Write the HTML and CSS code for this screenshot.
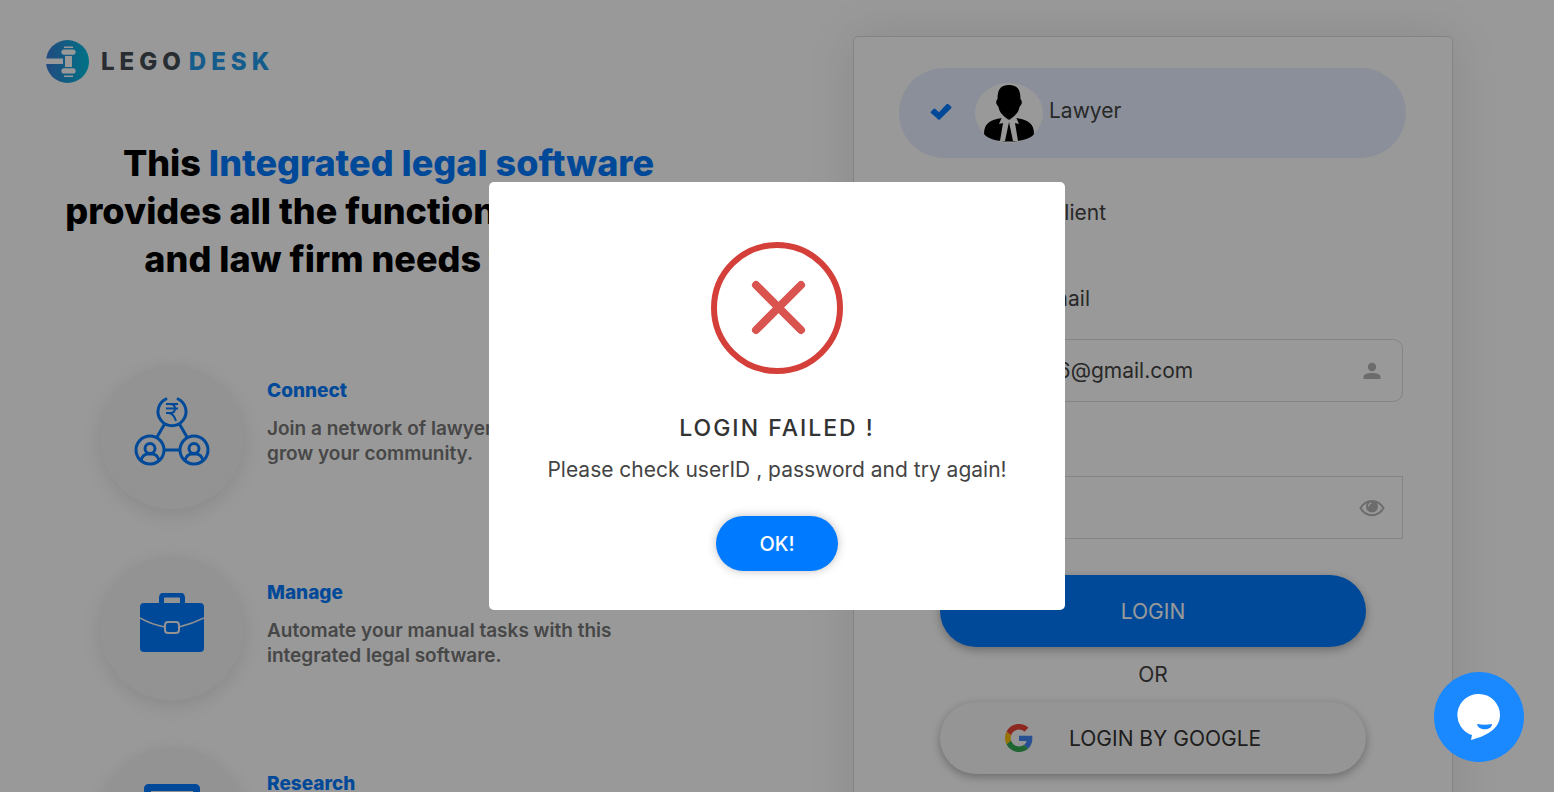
FILE: index.html
```html
<!DOCTYPE html>
<html lang="en">
<head>
<meta charset="utf-8">
<meta name="viewport" content="width=device-width, initial-scale=1">
<title>Legodesk Login</title>
<link rel="stylesheet" href="styles.css">
</head>
<body>
<main class="page">
  <section class="intro">
    <a class="logo" href="#">
      <svg class="logo-mark" viewBox="0 0 43 43" aria-hidden="true">
        <defs>
          <linearGradient id="mark" x1="0" x2="1"><stop offset="0" stop-color="#3a7bd5"/><stop offset="1" stop-color="#00bfe0"/></linearGradient>
        </defs>
        <circle cx="21.500" cy="21.500" r="21.500" fill="url(#mark)"/>
        <path fill="#fff" d="M0 18.500h17v5.500H0zM18 6.500h9V8h-9zM18 35.500h9V37h-9zM19 16h7v11H19zM18 9.500h9a2.600 2.600 0 0 1 0 5.200h-9a2.600 2.600 0 0 1 0-5.200zM18 28.300h9a2.600 2.600 0 0 1 0 5.200h-9a2.600 2.600 0 0 1 0-5.200z"/>
      </svg>
      <span class="logo-text">LEGO<span class="logo-accent">DESK</span></span>
    </a>
    <h1 class="headline">This <span class="accent">Integrated legal software</span><br>provides all the functions the lawyer<br>and law firm needs to grow.</h1>
    <div class="features">
      <article class="feature">
        <div class="feature-icon">
          <svg width="76" height="70" viewBox="0 0 76 70" fill="none" stroke="#007bff" stroke-width="3" stroke-linecap="round" aria-hidden="true">
            <path d="M32 2a14 14 0 1 0 12 0M30 28l-7 12M46 28l7 12M31 53h14"/>
            <path stroke-width="2" stroke-linecap="butt" d="M32 7h12M32 11.500h12M32 16h4q5 0 5-4.500T36 7M35 16q5 1 7 8"/>
            <circle cx="16" cy="53" r="14"/><circle cx="60" cy="53" r="14"/>
            <circle cx="16" cy="51.500" r="5"/><circle cx="60" cy="51.500" r="5"/>
            <path d="M7 63q2-6 7-6h4q5 0 7 6M51 63q2-6 7-6h4q5 0 7 6"/>
          </svg>
        </div>
        <div class="feature-text feature-text-raised">
          <h2 class="feature-title">Connect</h2>
          <p class="feature-copy">Join a network of lawyers and<br>grow your community.</p>
        </div>
      </article>
      <article class="feature">
        <div class="feature-icon">
          <svg width="64" height="60" viewBox="0 0 64 60" aria-hidden="true">
            <path d="M21.500 12V5q0-3 3-3h15q3 0 3 3v7" fill="none" stroke="#007bff" stroke-width="5"/>
            <rect y="10" width="64" height="49" rx="4" fill="#007bff"/>
            <path d="M0 25q12 7 25 9M39 34q13-3 25-9" fill="none" stroke="#f5f5f5" stroke-width="1.500"/>
            <rect x="25" y="29" width="14" height="11" rx="3" fill="#007bff" stroke="#f5f5f5" stroke-width="2"/>
          </svg>
        </div>
        <div class="feature-text">
          <h2 class="feature-title">Manage</h2>
          <p class="feature-copy">Automate your manual tasks with this<br>integrated legal software.</p>
        </div>
      </article>
      <article class="feature">
        <div class="feature-icon">
          <svg width="56" height="60" viewBox="0 0 56 60" fill="none" stroke="#007bff" stroke-width="7" aria-hidden="true">
            <rect x="3.500" y="3.500" width="49" height="53" rx="1"/><path d="M15 22h26M15 36h26"/>
          </svg>
        </div>
        <div class="feature-text">
          <h2 class="feature-title">Research</h2>
          <p class="feature-copy">Find judgements and case laws<br>from a single place.</p>
        </div>
      </article>
    </div>
  </section>

  <section class="panel">
    <form class="card">
      <label class="role role-active">
        <input class="role-input" type="radio" name="role" checked>
        <svg class="role-check" viewBox="0 0 22 17" aria-hidden="true"><path d="M1 8.500l2.500-2.500q1-1 2 0L9 9.200 16.500 1.200q1-1 2 0L21 3.500q1 1 0 2L10 16.200q-1 1-2 0L1 10q-.8-.8 0-1.500z" fill="#007bff"/></svg>
        <span class="avatar">
          <svg width="52" height="58" viewBox="0 0 52 58" aria-hidden="true">
            <path d="M26 0c9 0 11.500 5 11.500 14q2 2 1 5l-2 3c-1 6-5 9-10.500 13-5.500-4-9.500-7-10.500-13l-2-3q-1-3 1-5C14.500 5 17 0 26 0z"/>
            <path d="M19 33C7 35 1 38 1 49c7 10 43 10 50 0 0-11-6-14-18-16l-7 2z"/>
            <path fill="#fff" d="M19 32l7 3 7-3 3 7-4-1 3 18h-5l-4-19-4 19h-5l3-18-4 1z"/>
          </svg>
        </span>
        <span class="role-name">Lawyer</span>
      </label>
      <label class="role">
        <input class="role-input" type="radio" name="role">
        <span class="role-check"></span>
        <span class="avatar"></span>
        <span class="role-name">Client</span>
      </label>
      <label class="field-label field-label-email" for="email">Email</label>
      <div class="field">
        <input class="field-input field-round" id="email" type="text" value="lawyer6@gmail.com">
        <svg class="field-icon" width="26" height="18" viewBox="0 0 26 18" fill="#b5b5b5" aria-hidden="true"><circle cx="13" cy="5" r="4.200"/><path d="M4.500 17v-2c0-3 4-4 8.500-4s8.500 1 8.500 4v2z"/></svg>
      </div>
      <label class="field-label" for="password">Password</label>
      <div class="field">
        <input class="field-input" id="password" type="password">
        <svg class="field-icon" width="26" height="18" viewBox="0 0 26 18" aria-hidden="true"><path d="M1.500 9C7-.5 19-.5 24.500 9 19 18.500 7 18.500 1.500 9z" fill="none" stroke="#b5b5b5" stroke-width="2"/><circle cx="13" cy="7.500" r="6" fill="#b5b5b5"/><path d="M9.500 7.500q0-3 3-3.500" fill="none" stroke="#fff" stroke-width="1.200"/></svg>
      </div>
      <div class="actions">
        <button class="pill pill-primary" type="submit">LOGIN</button>
        <span class="or">OR</span>
        <button class="pill pill-google" type="button">
          <svg width="28" height="28" viewBox="0 0 48 48" aria-hidden="true">
            <path fill="#ea4335" d="M24 9.500c3.540 0 6.710 1.220 9.210 3.600l6.850-6.850C35.900 2.380 30.470 0 24 0 14.620 0 6.510 5.380 2.560 13.220l7.980 6.190C12.430 13.720 17.740 9.500 24 9.500z"/>
            <path fill="#4285f4" d="M46.980 24.550c0-1.570-.15-3.090-.38-4.550H24v9.020h12.940c-.58 2.960-2.260 5.480-4.780 7.180l7.730 6c4.510-4.180 7.090-10.360 7.090-17.650z"/>
            <path fill="#fbbc05" d="M10.530 28.590A14.500 14.500 0 0 1 9.770 24c0-1.600.27-3.140.76-4.590l-7.980-6.190A24 24 0 0 0 0 24c0 3.880.92 7.540 2.560 10.780z"/>
            <path fill="#34a853" d="M24 48c6.480 0 11.930-2.130 15.890-5.810l-7.730-6c-2.150 1.450-4.920 2.300-8.160 2.300-6.260 0-11.570-4.220-13.470-9.910l-7.980 6.190C6.510 42.620 14.620 48 24 48z"/>
          </svg>
          <span>LOGIN BY GOOGLE</span>
        </button>
      </div>
    </form>
  </section>
</main>

<div class="backdrop">
  <div class="dialog" role="alertdialog" aria-labelledby="dialog-title" aria-describedby="dialog-copy">
    <svg width="132" height="132" viewBox="0 0 132 132" fill="none" aria-hidden="true">
      <circle cx="66" cy="66" r="63" stroke="#d43f3a" stroke-width="6"/>
      <path d="M45 43l45 45M90 43L45 88" stroke="#d9534f" stroke-width="8" stroke-linecap="round"/>
    </svg>
    <h2 class="dialog-title" id="dialog-title">LOGIN FAILED !</h2>
    <p class="dialog-copy" id="dialog-copy">Please check userID , password and try again!</p>
    <button class="dialog-button" type="button">OK!</button>
  </div>
</div>

<button class="chat" type="button" aria-label="Open chat">
  <svg width="44" height="48" viewBox="0 0 44 48" aria-hidden="true">
    <path d="M22 1a21 21 0 0 1 21 21c0 14-14 21-29 25l1-5A21 21 0 0 1 22 1z" fill="#fff"/>
    <path d="M20 31q8 1.500 15 0c0 7-14 7-15 0z" fill="#1a88ff"/>
  </svg>
</button>
</body>
</html>
```

FILE: styles.css
```css
* {
  box-sizing: border-box;
}

body {
  margin: 0;
  height: 100vh;
  overflow: hidden;
  background: #fff;
  color: #444;
  font-family: Inter, "Open Sans", sans-serif;
  font-size: 21px;
}

h1, h2, p {
  margin: 0;
}

button, input {
  font: inherit;
}

.page {
  display: grid;
  grid-template-columns: 1fr 1fr;
}

.intro {
  padding-top: 40px;
}

.logo {
  display: flex;
  align-items: center;
  gap: 12px;
  margin-left: 46px;
  text-decoration: none;
}

.logo-mark {
  width: 43px;
  height: 43px;
}

.logo-text {
  color: #444c54;
  font-size: 24px;
  font-weight: 800;
  line-height: 40px;
  letter-spacing: 5px;
}

.logo-accent {
  margin-left: 3px;
  color: #2299e8;
}

.headline {
  margin-top: 56px;
  color: #000;
  font-size: 36px;
  font-weight: 800;
  line-height: 48px;
  text-align: center;
  white-space: nowrap;
}

.accent {
  color: #007bff;
}

.features {
  display: grid;
  gap: 47px;
  margin: 82px 0 0 100px;
}

.feature {
  display: flex;
  align-items: center;
  gap: 23px;
}

.feature-icon {
  display: flex;
  flex: none;
  align-items: center;
  justify-content: center;
  width: 144px;
  height: 144px;
  padding-bottom: 10px;
  border-radius: 50%;
  background: #f5f5f5;
  box-shadow: 0 6px 20px rgba(0, 0, 0, .1);
}

.feature-text {
  padding-bottom: 8px;
}

.feature-text-raised {
  padding-bottom: 30px;
}

.feature-title {
  margin-bottom: 12px;
  color: #007bff;
  font-size: 19px;
  font-weight: 800;
  line-height: 26px;
}

.feature-copy {
  color: #777;
  font-size: 19px;
  font-weight: 600;
  line-height: 25px;
  white-space: nowrap;
}

.panel {
  display: flex;
  justify-content: center;
  padding: 36px 25px 40px 0;
}

.card {
  width: 100%;
  max-width: 600px;
  padding: 31px 46px 60px 45px;
  border: 1px solid #ddd;
  border-radius: 5px;
  background: #fff;
  box-shadow: 0 0 50px rgba(0, 0, 0, .1);
}

.role {
  display: flex;
  align-items: center;
  height: 90px;
  margin-bottom: 12px;
  padding: 0 0 4px 31px;
  border-radius: 45px;
}

.role-active {
  background: #e8efff;
}

.role-input {
  position: absolute;
  opacity: 0;
}

.role-check {
  width: 22px;
  height: 17px;
}

.avatar {
  display: flex;
  align-items: flex-end;
  justify-content: center;
  width: 68px;
  height: 60px;
  margin: 4px 6px 0 23px;
  border-radius: 50%;
}

.role-active .avatar {
  background: #fff;
}

.role-name {
  line-height: 28px;
}

.field-label {
  display: block;
  margin-top: 20px;
  padding-left: 4px;
  line-height: 28px;
}

.field-label-email {
  margin-top: 25px;
  padding-left: 138px;
}

.field {
  display: flex;
  align-items: center;
  margin: 26px 3px 0 4px;
  position: relative;
}

.field-input {
  width: 100%;
  height: 63px;
  padding: 0 60px 0 88px;
  border: 1px solid #ddd;
  background: #fff;
  color: #444;
}

.field-round {
  border-radius: 10px;
}

.field-icon {
  position: absolute;
  right: 18px;
}

.actions {
  display: flex;
  flex-direction: column;
  margin: 36px 40px 0 41px;
}

.pill {
  display: flex;
  align-items: center;
  justify-content: center;
  height: 72px;
  border: 0;
  border-radius: 36px;
  box-shadow: 0 3px 10px rgba(0, 0, 0, .3);
}

.pill-primary {
  background: #007bff;
  color: #fff;
}

.or {
  padding: 14px 0 13px;
  line-height: 28px;
  text-align: center;
}

.pill-google {
  justify-content: flex-start;
  gap: 36px;
  padding-left: 65px;
  background: #f8f8f8;
  color: #333;
}

.backdrop {
  position: fixed;
  inset: 0;
  display: flex;
  align-items: center;
  justify-content: center;
  background: rgba(0, 0, 0, .4);
}

.dialog {
  display: flex;
  flex-direction: column;
  align-items: center;
  width: 576px;
  max-width: 100%;
  padding: 60px 20px 39px;
  border-radius: 5px;
  background: #fff;
}

.dialog-title {
  margin-top: 38px;
  color: #333;
  font-size: 23px;
  font-weight: 500;
  line-height: 32px;
  letter-spacing: 2px;
}

.dialog-copy {
  margin-top: 10px;
  line-height: 32px;
}

.dialog-button {
  width: 122px;
  height: 55px;
  margin-top: 30px;
  border: 0;
  border-radius: 28px;
  background: #007bff;
  box-shadow: 0 0 10px rgba(0, 0, 0, .25);
  color: #fff;
  font-size: 20px;
  font-weight: 500;
}

.chat {
  position: fixed;
  right: 30px;
  bottom: 30px;
  display: flex;
  align-items: center;
  justify-content: center;
  width: 90px;
  height: 90px;
  border: 0;
  border-radius: 50%;
  background: #1a88ff;
}
```
